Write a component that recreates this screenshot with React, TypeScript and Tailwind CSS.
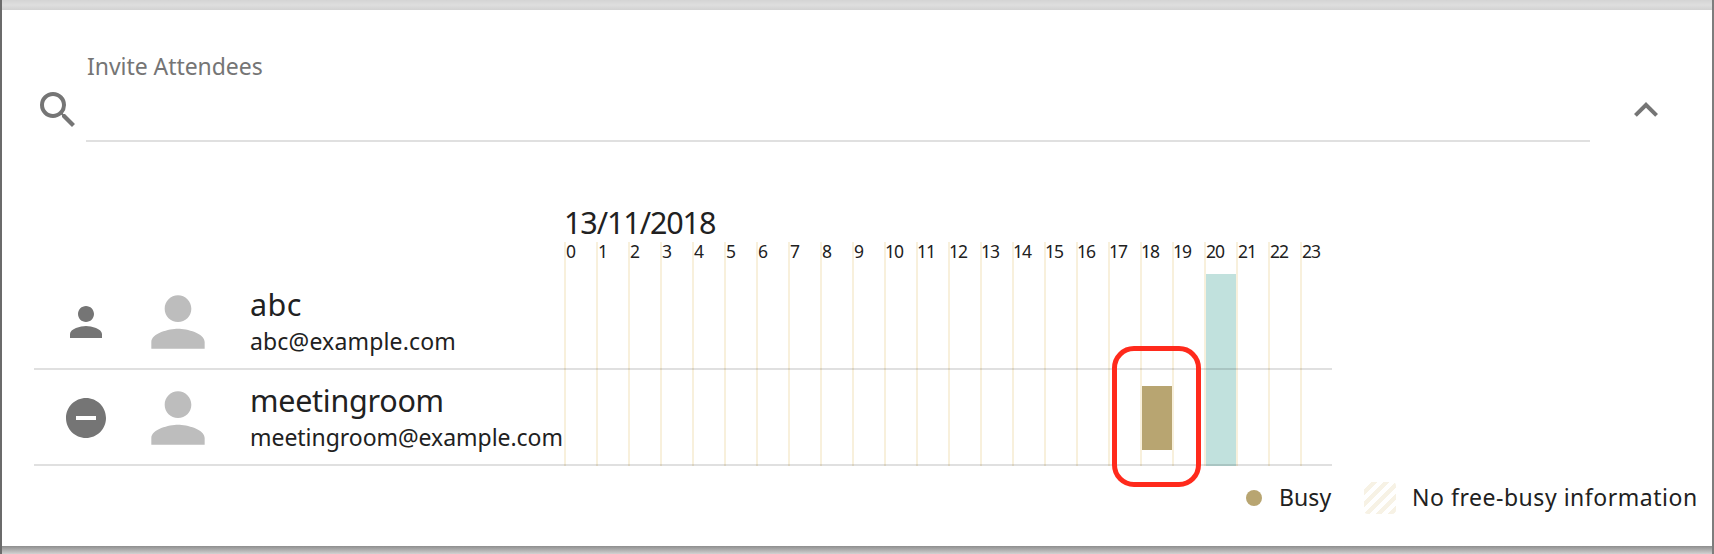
import React from "react";
import { MdSearch, MdKeyboardArrowUp, MdPerson, MdRemoveCircle } from "react-icons/md";

const HOURS = Array.from({ length: 24 }, (_, hour) => hour);

type Attendee = { name: string; email: string; nameClass: string; emailClass: string; icon: React.ReactNode };

const ATTENDEES: Attendee[] = [
  {
    name: "abc",
    email: "abc@example.com",
    nameClass: "tracking-[0.4px]",
    emailClass: "tracking-[0.16px]",
    icon: <MdPerson size={48} />,
  },
  {
    name: "meetingroom",
    email: "meetingroom@example.com",
    nameClass: "tracking-[-0.27px]",
    emailClass: "tracking-[-0.04px]",
    icon: <MdRemoveCircle size={48} />,
  },
];

function InviteField() {
  return (
    <div className="flex h-[132px] items-start pl-8">
      <MdSearch size={48} className="mt-[76px] shrink-0 text-[#757575]" />
      <label className="ml-1 flex h-[132px] w-[1504px] flex-col border-b-2 border-[#e0e0e0] pt-[42px]">
        <span className="pl-px text-[23px] leading-[28px] tracking-[-0.05px] text-[#757575]">Invite Attendees</span>
      </label>
      <button className="ml-8 mt-[76px] text-[#757575]" aria-label="Collapse">
        <MdKeyboardArrowUp size={48} />
      </button>
    </div>
  );
}

function AttendeeRow({ attendee }: { attendee: Attendee }) {
  return (
    <div className="flex h-24 items-start border-b-2 border-black/12">
      <div className="ml-7 mt-6 text-[#757575]">{attendee.icon}</div>
      <MdPerson size={80} className="ml-7 mt-2 shrink-0 text-[#bdbdbd]" />
      <div className="ml-8 flex flex-col pt-3">
        <span className={`text-[30.5px] leading-9 ${attendee.nameClass}`}>{attendee.name}</span>
        <span className={`mt-[5px] text-[23px] leading-[28px] ${attendee.emailClass}`}>{attendee.email}</span>
      </div>
    </div>
  );
}

function HourColumn({ hour }: { hour: number }) {
  return (
    <div className="flex w-8 flex-col border-l-2 border-[#f8f0dc]">
      <span className={`h-8 text-[17.5px] leading-[18px] tracking-[-0.9px] ${hour >= 10 && hour < 20 ? "-ml-px" : ""}`}>
        {hour}
      </span>
      {hour === 18 && <div className="mt-[112px] h-16 w-[30px] bg-[#b8a571]" />}
      {hour === 20 && <div className="h-48 w-[30px] bg-[#c1e1dd]" />}
    </div>
  );
}

function Schedule() {
  return (
    <div className="relative ml-8 mt-[62px] w-[1298px]">
      <h2 className="ml-[530px] text-[30.5px] leading-9 tracking-[-1.1px]">13/11/2018</h2>
      <div className="mt-0.5 grid">
        <div className="col-start-1 row-start-1 ml-[530px] flex h-56">
          {HOURS.map((hour) => (
            <HourColumn key={hour} hour={hour} />
          ))}
        </div>
        <div className="col-start-1 row-start-1 pt-8">
          {ATTENDEES.map((attendee) => (
            <AttendeeRow key={attendee.email} attendee={attendee} />
          ))}
        </div>
      </div>
      <div className="absolute left-[1078px] top-[142px] h-[141px] w-[89px] rounded-[22px] border-[5px] border-[#ff2a1c]" />
    </div>
  );
}

function Legend() {
  return (
    <div className="mt-4 flex h-8 items-center pl-[1244px]">
      <span className="size-4 rounded-full bg-[#b8a571]" />
      <span className="ml-[17px] w-[85px] pb-0.5 text-[23px] leading-[28px] tracking-[0.1px]">Busy</span>
      <span className="size-8 rounded-[4px] bg-[repeating-linear-gradient(135deg,#f7f2e5_0px,#f7f2e5_1px,#ffffff_1px,#ffffff_5.5px,#f7f2e5_5.5px,#f7f2e5_8.5px)]" />
      <span className="ml-4 whitespace-nowrap pb-0.5 text-[23px] leading-[28px] tracking-[0.53px]">
        No free-busy information
      </span>
    </div>
  );
}

export default function App() {
  return (
    <div className="flex h-[554px] w-[1714px] flex-col overflow-hidden border-l-2 border-r-2 border-l-[#6b6b6b] border-r-[#7d7d7d] bg-[#dedede] font-['Noto_Sans',sans-serif] text-[#212121]">
      <div className="h-2.5 shrink-0 bg-linear-to-b from-[#d4d4d4] via-[#dedede] to-[#d2d2d2]" />
      <main className="h-[536px] shrink-0 bg-white">
        <InviteField />
        <Schedule />
        <Legend />
      </main>
      <div className="h-2 shrink-0 bg-linear-to-b from-[#8e8e8e] to-[#d2d2d2]" />
    </div>
  );
}
